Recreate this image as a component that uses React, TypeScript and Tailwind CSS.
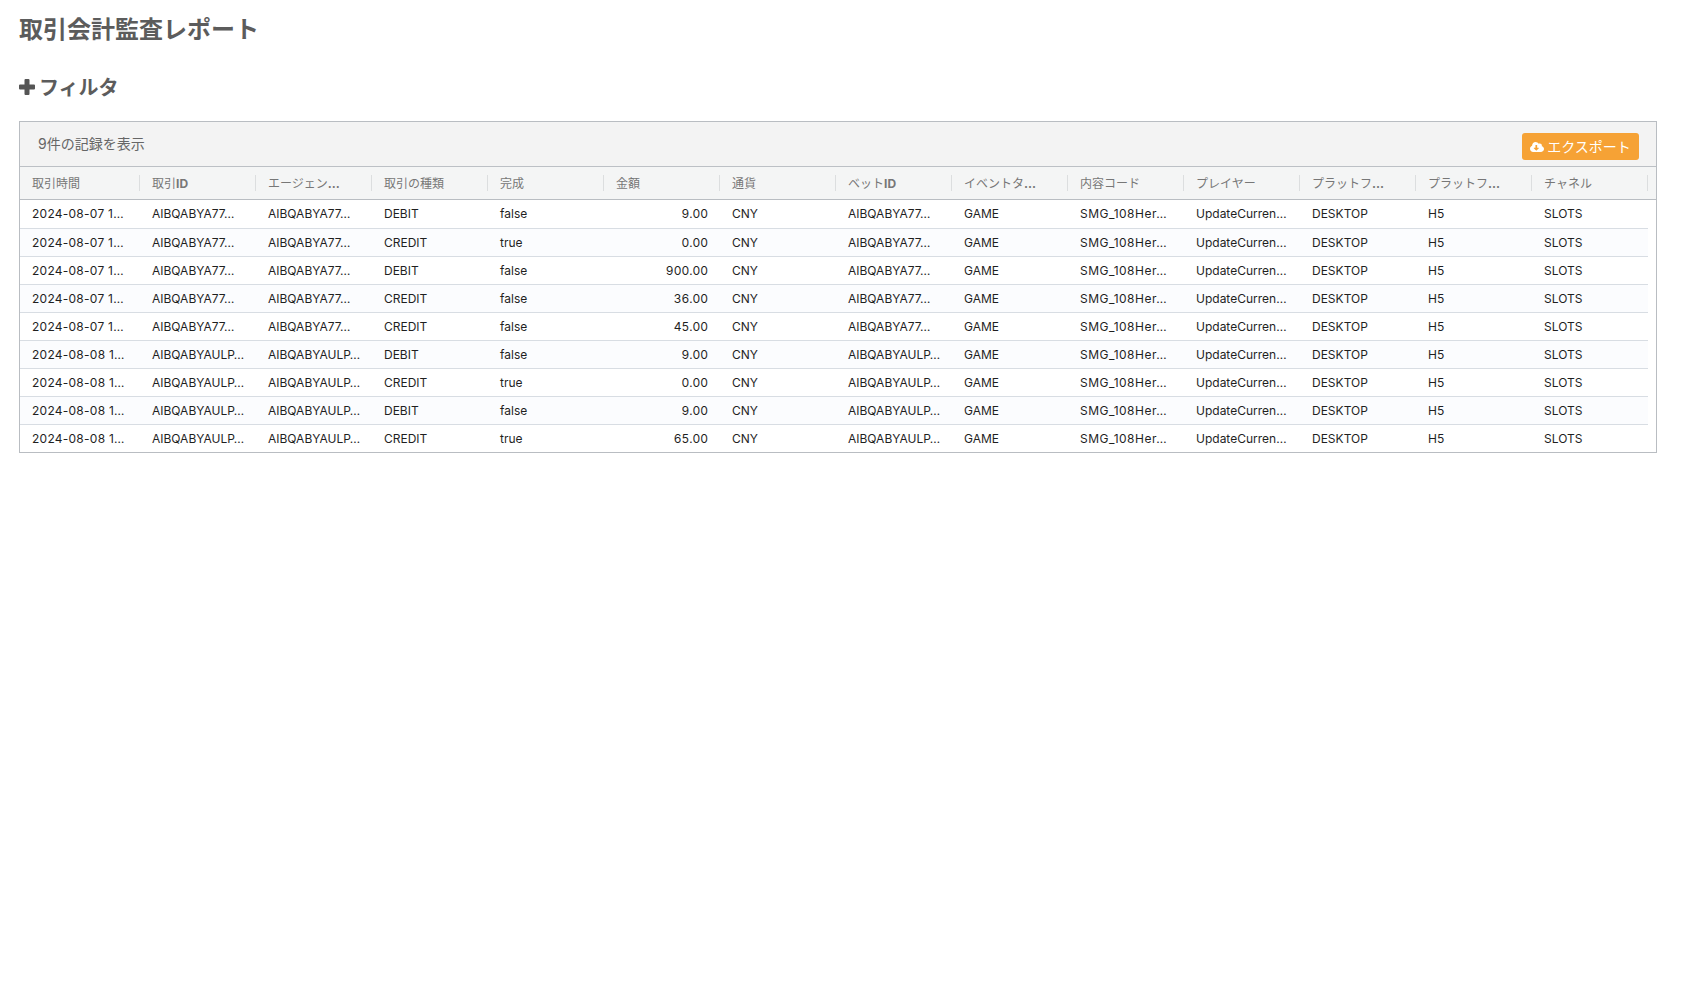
const font = "font-['Inter','Noto_Sans_CJK_JP',sans-serif]";

type Col = { ja: string; latin?: string; w: string; right?: boolean };

const columns: Col[] = [
  { ja: "取引時間", w: "w-[120px]" },
  { ja: "取引", latin: "ID", w: "w-[116px]" },
  { ja: "エージェン", latin: "...", w: "w-[116px]" },
  { ja: "取引の種類", w: "w-[116px]" },
  { ja: "完成", w: "w-[116px]" },
  { ja: "金額", w: "w-[116px]", right: true },
  { ja: "通貨", w: "w-[116px]" },
  { ja: "ベット", latin: "ID", w: "w-[116px]" },
  { ja: "イベントタ", latin: "...", w: "w-[116px]" },
  { ja: "内容コード", w: "w-[116px]" },
  { ja: "プレイヤー", w: "w-[116px]" },
  { ja: "プラットフ", latin: "...", w: "w-[116px]" },
  { ja: "プラットフ", latin: "...", w: "w-[116px]" },
  { ja: "チャネル", w: "w-[116px]" },
];

const a = "AIBQABYA77…";
const b = "AIBQABYAULP…";
const rows: [string, string, string, string, string][] = [
  ["2024-08-07 1…", a, "DEBIT", "false", "9.00"],
  ["2024-08-07 1…", a, "CREDIT", "true", "0.00"],
  ["2024-08-07 1…", a, "DEBIT", "false", "900.00"],
  ["2024-08-07 1…", a, "CREDIT", "false", "36.00"],
  ["2024-08-07 1…", a, "CREDIT", "false", "45.00"],
  ["2024-08-08 1…", b, "DEBIT", "false", "9.00"],
  ["2024-08-08 1…", b, "CREDIT", "true", "0.00"],
  ["2024-08-08 1…", b, "DEBIT", "false", "9.00"],
  ["2024-08-08 1…", b, "CREDIT", "true", "65.00"],
];

function Row({ r, i }: { r: (typeof rows)[number]; i: number }) {
  const cells = [
    r[0], r[1], r[1], r[2], r[3], r[4], "CNY", r[1], "GAME",
    "SMG_108Her…", "UpdateCurren…", "DESKTOP", "H5", "SLOTS",
  ];
  return (
    <div
      className={`flex w-[1628px] border-b border-[#d8dde3] last:border-b-0 ${
        i === 0 ? "h-[29px]" : i === 8 ? "h-[27px]" : "h-[28px]"
      } ${i % 2 === 1 ? "bg-[#fbfcfe]" : "bg-white"}`}
    >
      {cells.map((c, j) => (
        <div
          key={j}
          className={`${columns[j].w} shrink-0 whitespace-nowrap px-3 leading-[27px] ${
            columns[j].right ? "text-right tabular-nums" : ""
          } ${j === 0 ? "tracking-[0.25px]" : ""} ${j === 9 ? "tracking-[0.5px]" : ""}`}
        >
          {c}
        </div>
      ))}
    </div>
  );
}

export default function App() {
  return (
    <div className={`${font} min-h-[1000px] bg-white pl-[19px] pr-[24px] text-[#5c5c5c]`}>
      <h1 className="pt-[14px] text-2xl font-bold leading-8">取引会計監査レポート</h1>
      <div className="mt-[26px] flex h-8 items-center gap-[4px] text-[20px] font-bold leading-8">
        <svg viewBox="0 0 16 16" className="mb-[2px] h-4 w-4 fill-[#555555]">
          <path d="M6.5 0h3a1 1 0 0 1 1 1v4.5H15a1 1 0 0 1 1 1v3a1 1 0 0 1-1 1h-4.5V15a1 1 0 0 1-1 1h-3a1 1 0 0 1-1-1v-4.5H1a1 1 0 0 1-1-1v-3a1 1 0 0 1 1-1h4.5V1a1 1 0 0 1 1-1z" />
        </svg>
        <span>フィルタ</span>
      </div>
      <div className="mt-[17px] border border-[#b9bdc2]">
        <div className="flex h-[45px] justify-between border-b border-[#bcc0c5] bg-[#f3f3f3] pl-[18px] pr-[17px]">
          <span className="pt-[12px] text-sm leading-5 text-[#666666]">9件の記録を表示</span>
          <button className="mt-[11px] flex h-[27px] w-[117px] items-center justify-center gap-[3px] rounded-[3px] bg-[#f6a235] text-sm text-white">
            <svg viewBox="0 0 640 512" className="h-[14px] w-[14px] fill-white">
              <path d="M537.6 226.6c4.1-10.7 6.4-22.4 6.4-34.6 0-53-43-96-96-96-19.7 0-38.1 6-53.3 16.2C367 64.2 315.3 32 256 32c-88.4 0-160 71.6-160 160 0 2.7.1 5.4.2 8.1C40.2 219.8 0 273.2 0 336c0 79.5 64.5 144 144 144h368c70.7 0 128-57.3 128-128 0-61.9-44-113.6-102.4-125.4zm-132.9 88.7L299.3 420.7c-6.2 6.2-16.4 6.2-22.6 0L171.3 315.3c-10.1-10.1-2.9-27.3 11.3-27.3H248V176c0-8.8 7.2-16 16-16h48c8.8 0 16 7.2 16 16v112h65.4c14.2 0 21.4 17.2 11.3 27.3z" />
            </svg>
            エクスポート
          </button>
        </div>
        <div className="flex h-[33px] items-center border-b border-[#b9bdc2] bg-[#f4f5f5]">
          {columns.map((c, i) => (
            <div
              key={i}
              className={`${c.w} flex h-4 shrink-0 items-center border-r border-[#dcdedf] pl-3 pt-[2px] text-xs leading-4 text-[#777777]`}
            >
              <span className="whitespace-nowrap">{c.ja}</span>
              {c.latin ? <span className="whitespace-nowrap font-bold">{c.latin}</span> : null}
            </div>
          ))}
        </div>
        <div className="text-xs text-[#1f1f1f]">
          {rows.map((r, i) => (
            <Row key={i} r={r} i={i} />
          ))}
        </div>
      </div>
    </div>
  );
}
